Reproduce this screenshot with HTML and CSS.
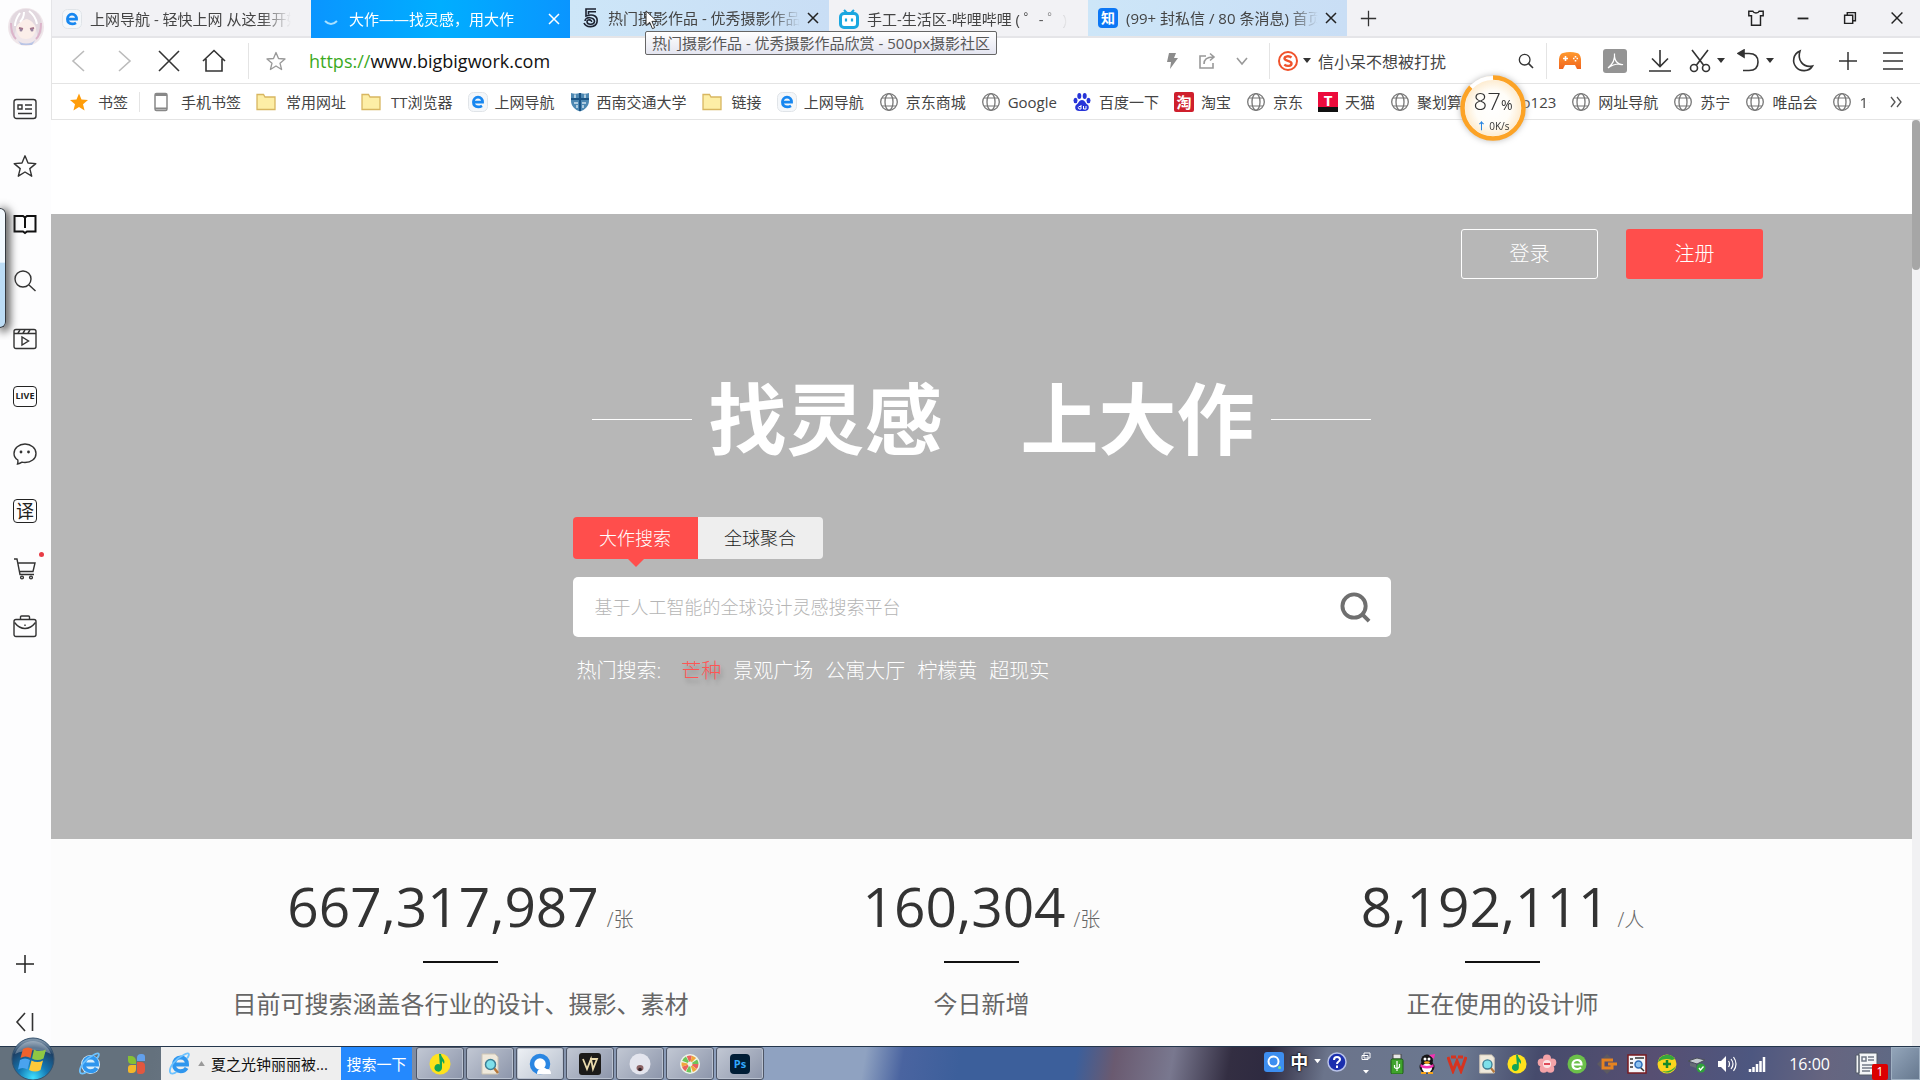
FILE: index.html
```html
<!DOCTYPE html>
<html lang="zh-CN">
<head>
<meta charset="utf-8">
<title>大作——找灵感，用大作</title>
<link rel="stylesheet" href="styles.css">
</head>
<body>
<svg class="defs" aria-hidden="true">
  <defs>
    <linearGradient id="gBlue" x1="0" y1="0" x2="0" y2="1"><stop offset="0" stop-color="#5cc4ff"/><stop offset="1" stop-color="#1577dc"/></linearGradient>
    <radialGradient id="gOrb" cx=".5" cy=".95" r=".9"><stop offset="0" stop-color="#3fe0ff"/><stop offset=".4" stop-color="#1478b4"/><stop offset=".8" stop-color="#1d4065"/><stop offset="1" stop-color="#7d93a8"/></radialGradient>
    <linearGradient id="gPad" x1="0" y1="0" x2="0" y2="1"><stop offset="0" stop-color="#ff9a2e"/><stop offset="1" stop-color="#f0641e"/></linearGradient>
    <radialGradient id="gBall"><stop offset="0" stop-color="#fff"/><stop offset=".55" stop-color="#fffdf8"/><stop offset="1" stop-color="#fde6c2"/></radialGradient>
    <symbol id="globe" viewBox="0 0 20 20"><g fill="none" stroke="#777" stroke-width="1.3"><circle cx="10" cy="10" r="8.3"/><ellipse cx="10" cy="10" rx="4" ry="8.3"/><path d="M3 6h14M3 14h14" stroke-width="1"/></g></symbol>
    <symbol id="folder" viewBox="0 0 20 20"><path d="M1 3.5V17.500h18V5H9L7.500 2.500H1z" fill="#fdeea6" stroke="#d8b660" stroke-width="1.300"/></symbol>
    <symbol id="edge" viewBox="0 0 20 20"><rect x=".5" y=".5" width="19" height="19" rx="5" fill="#f4f7fa" stroke="#e0e4e8"/><path d="M5.400 10.200h9.200c.2-3-1.800-5-4.600-5-2.700 0-4.600 2-4.600 4.900 0 3 2 4.800 4.800 4.800 1.500 0 2.700-.4 3.800-1.100" fill="none" stroke="#1787f0" stroke-width="2.700"/></symbol>
    <symbol id="ie" viewBox="0 0 24 24"><path d="M6 12.500h13c.2-4.500-2.600-7-6.500-7S6 8.500 6 12.500s2.800 6.700 6.700 6.700c2.600 0 4.600-1 5.900-3.200" fill="none" stroke="#2f96ee" stroke-width="4"/><path d="M19 6.500C23 1 20 0 15.500 3 7 7 1 15.500 2 20c.6 2.600 4 1.600 6.500 0" fill="none" stroke="#6cc2ff" stroke-width="1.800"/></symbol>
    <symbol id="x" viewBox="0 0 14 14"><path d="M2 2l10 10M12 2L2 12" fill="none" stroke="currentColor" stroke-width="1.500"/></symbol>
    <symbol id="plus" viewBox="0 0 20 20"><path d="M10 1v18M1 10h18" fill="none" stroke="currentColor" stroke-width="1.500"/></symbol>
    <symbol id="star" viewBox="0 0 24 24"><path d="M12 1.800l3 7.200 7.800.6-6 5 1.900 7.600L12 18l-6.700 4.200 1.900-7.600-6-5L9 9z" stroke-linejoin="round"/></symbol>
    <symbol id="lens" viewBox="0 0 24 24"><circle cx="10" cy="10" r="8" fill="none" stroke="currentColor" stroke-width="2"/><path d="M16 16l6.500 6.500" stroke="currentColor" stroke-width="2.400"/></symbol>
    <symbol id="caret" viewBox="0 0 8 6"><path d="M0 0h8L4 5z" fill="currentColor"/></symbol>
    <symbol id="note" viewBox="0 0 22 22"><circle cx="11" cy="11" r="10.500" fill="#ffe21c"/><path d="M10 1l2 0c0 4 5 5 3 10l-2-3v7a3.800 3.800 0 1 1-2.200-3.600z" fill="#12a557"/></symbol>
    <symbol id="finddoc" viewBox="0 0 22 22"><path d="M3 1h13l3 3v17H3z" fill="#efe9dc" stroke="#cfc6b4"/><path d="M15 15l4 5" stroke="#b5763a" stroke-width="2.500"/><circle cx="11.500" cy="11.500" r="5" fill="#7ee0ea" stroke="#3d7f96" stroke-width="1.500"/></symbol>
  </defs>
</svg>

<div class="screen">
  <aside class="side">
    <svg class="avatar" viewBox="0 0 38 42"><ellipse cx="19" cy="21" rx="18" ry="19" fill="#efe6ea"/><path d="M3 26C1 10 9 3 19 3s18 7 16 23l-4 6-3-13-9-6-9 6-3 13z" fill="#e2d8df"/><path d="M9 22c1 8 5 11 10 11s9-3 10-11c-2-5-5-8-9-9-5 1-9 4-11 9z" fill="#fbeee9"/><path d="M13 7c-3 4-5 8-5 13M22 5c4 3 7 7 8 13M17 6c0 4-1 7-4 10" fill="none" stroke="#fff" stroke-width="2"/><path d="M12 22l4 1M23 23l4-1" stroke="#a6758b" stroke-width="2"/><circle cx="14" cy="24" r="1.500" fill="#96839f"/><circle cx="25" cy="24" r="1.500" fill="#96839f"/><path d="M10 33c3 6 15 6 19 0l-4 6H14z" fill="#b9c5e6"/><path d="M4 17c0 8 2 13 5 16M34 17c0 8-2 13-5 16" stroke="#dcb4ca" stroke-width="2" fill="none"/></svg>
    <nav class="side-nav" aria-label="侧边栏">
      <button aria-label="资讯"><svg viewBox="0 0 24 24"><rect x="1" y="2.500" width="22" height="19" rx="2.500"/><path d="M5 8h4v4H5zM12 8h7M12 12h7M5 16.500h14"/></svg></button>
      <button aria-label="收藏"><svg viewBox="0 0 24 24"><use href="#star"/></svg></button>
      <button aria-label="阅读"><svg viewBox="0 0 24 24" class="bold"><path d="M1.500 4H10l2 1.500L14 4h8.500v15.500H14L12 21l-2-1.500H1.500zM12 5.500V16"/></svg></button>
      <button aria-label="搜索"><svg viewBox="0 0 24 24"><circle cx="10" cy="10" r="8"/><path d="M16 16l6.500 6"/></svg></button>
      <button aria-label="视频"><svg viewBox="0 0 24 24"><rect x="1" y="2.500" width="22" height="19" rx="2"/><path d="M1 6.500h22M5 6l2-3M10 6l2-3M15 6l2-3M9 10v8l6.500-4z"/></svg></button>
      <button aria-label="直播"><span class="box live">LIVE</span></button>
      <button aria-label="消息"><svg viewBox="0 0 24 24"><path d="M4.500 22c.5-1.500.6-2.500.3-4C2.400 16.500 1 14 1 11.500 1 6 6 2 12 2s11 4 11 9.500S18 20.500 12 20.500c-1 0-2 0-3-.3-1.300.9-2.600 1.500-4.500 1.800z"/><circle cx="8" cy="10" r=".7"/><circle cx="15.500" cy="10" r=".7"/></svg></button>
      <button aria-label="翻译"><span class="box trans">译</span></button>
      <button aria-label="购物" class="dot"><svg viewBox="0 0 24 24"><path d="M1 2h3l3 15.500h14M5.500 6H22l-2 8.500H7"/><circle cx="9" cy="20.500" r="1.400"/><circle cx="18" cy="20.500" r="1.400"/></svg></button>
      <button aria-label="工具箱"><svg viewBox="0 0 24 24"><rect x="1" y="5.500" width="22" height="17" rx="2"/><path d="M7.500 5V3q0-1 1-1h7q1 0 1 1v2M1.500 8.500C5 13 9 14.500 12 14.500s7-1.500 10.500-6M12 10.500v1.500"/></svg></button>
    </nav>
    <div class="side-foot">
      <button aria-label="添加"><svg class="small" viewBox="0 0 20 20"><use href="#plus"/></svg></button>
      <button aria-label="收起"><svg class="small" viewBox="0 0 20 20"><path d="M10 1L2 10l8 9M17.500 1v18"/></svg></button>
    </div>
    <div class="dock"></div>
  </aside>

  <div class="browser">
    <header class="tabs">
      <div class="tab"><svg class="fav" viewBox="0 0 20 20"><use href="#edge"/></svg><span>上网导航 - 轻快上网 从这里开始</span></div>
      <div class="tab current"><svg class="fav" viewBox="0 0 20 20"><path d="M4 12q6 6 12 0" fill="none" stroke="#a8e0ff" stroke-width="2"/></svg><span>大作——找灵感，用大作</span><button aria-label="关闭"><svg viewBox="0 0 14 14"><use href="#x"/></svg></button></div>
      <div class="tab tint"><svg class="fav" viewBox="0 0 20 20"><g fill="none" stroke="#1c2230" stroke-width="1.600"><path d="M16 1H6v7c8-3 12 1 11 6-1 6-11 6-13 1M16 3.800H8.500v2.500M5 13c0-5 10-4 9.500.5-.5 4-7.500 3.500-7.500 0 0-2.500 5-2 4.500.5"/></g></svg><span>热门摄影作品 - 优秀摄影作品欣赏</span><button aria-label="关闭"><svg viewBox="0 0 14 14"><use href="#x"/></svg></button></div>
      <div class="tab"><svg class="fav" viewBox="0 0 20 20"><rect x="1.500" y="4.500" width="17" height="14" rx="3.500" fill="#fff" stroke="#1aa7e0" stroke-width="3"/><path d="M5 1l3 3M15 1l-3 3M7 9.500v3M13 9.500v3" stroke="#1aa7e0" stroke-width="2.200"/></svg><span>手工-生活区-哔哩哔哩 ( ゜- ゜)つロ</span></div>
      <div class="tab tint"><i class="fav zhi">知</i><span>(99+ 封私信 / 80 条消息) 首页</span><button aria-label="关闭"><svg viewBox="0 0 14 14"><use href="#x"/></svg></button></div>
      <button class="new" aria-label="新标签页"><svg viewBox="0 0 20 20"><use href="#plus"/></svg></button>
      <div class="win">
        <button aria-label="皮肤"><svg viewBox="0 0 20 20"><path d="M2 2.500h4.500c1 2.500 6 2.500 7 0H18v5h-3v10.500H5V7.500H2z"/></svg></button>
        <button aria-label="最小化"><svg viewBox="0 0 20 20"><path d="M4 10.500h12" stroke-width="2"/></svg></button>
        <button aria-label="还原"><svg viewBox="0 0 20 20"><path d="M4 7h9v9H4zM7 7V4h9v9h-3"/></svg></button>
        <button aria-label="关闭窗口"><svg viewBox="0 0 20 20"><path d="M4 4l12 12M16 4L4 16"/></svg></button>
      </div>
    </header>

    <div class="toolbar">
      <button class="w45 off" aria-label="后退"><svg viewBox="0 0 24 24"><path d="M17 2L6 12l11 10"/></svg></button>
      <button class="w45 off" aria-label="前进"><svg viewBox="0 0 24 24"><path d="M7 2l11 10L7 22"/></svg></button>
      <button class="w45" aria-label="停止"><svg viewBox="0 0 24 24"><path d="M2 2l20 20M22 2L2 22"/></svg></button>
      <button class="w45" aria-label="主页"><svg viewBox="0 0 24 24"><path d="M1 12L12 1.500 23 12M4 10v12h16V10"/></svg></button>
      <i class="sep gap"></i>
      <button class="w45 mute" aria-label="收藏"><svg class="s20" viewBox="0 0 24 24"><use href="#star"/></svg></button>
      <label class="url"><span>https://</span><input type="text" value="www.bigbigwork.com" aria-label="地址"></label>
      <button class="w35 mute" aria-label="极速"><svg class="s18" viewBox="0 0 18 18"><path d="M6 1h7l-2 5h4L7 17l1-7H4z" fill="#8c8c8c" stroke="none"/></svg></button>
      <button class="w35 mute" aria-label="分享"><svg class="s18" viewBox="0 0 18 18"><path d="M8 4H2v12h13v-5M6 12c0-5 3-7 9-7M12 1.500L16 5l-4 3.500"/></svg></button>
      <button class="w35 mute" aria-label="展开"><svg class="s18" viewBox="0 0 18 18"><path d="M4 6l5 6 5-6"/></svg></button>
      <label class="query"><svg viewBox="0 0 20 20"><circle cx="10" cy="10" r="9" fill="#fff" stroke="#f0522b" stroke-width="2"/><path d="M13.500 6.500C11 4.500 6.500 5 6.500 7.600s7 2 7 4.800-4.500 3.300-7.200 1.200" fill="none" stroke="#f0522b" stroke-width="2.400"/></svg><svg class="caret" viewBox="0 0 8 6"><use href="#caret"/></svg><input type="text" value="信小呆不想被打扰" aria-label="搜索"><svg class="go" viewBox="0 0 24 24"><use href="#lens"/></svg></label>
      <button class="w45" aria-label="游戏"><svg viewBox="0 0 24 24"><path d="M5 4q7-2 14 0c2 .5 3.500 2 4 6v10h-4l-2-4H7l-2 4H1V10c.5-4 2-5.500 4-6z" fill="url(#gPad)" stroke="none"/><path d="M7.500 7v5M5 9.500h5M15 9.500h1.500M18.500 9.500H20M17.500 7v1.500M17.500 11v1.500" stroke="#fff"/></svg></button>
      <button class="w45" aria-label="PDF"><svg viewBox="0 0 24 24"><rect width="24" height="24" rx="3" fill="#949494" stroke="none"/><path d="M5 19c5-4 7-10 6.500-14.500C11 12 15 16 20 15.500 14 14 9 16 5 19z" stroke="#fff" stroke-width="1.200"/></svg></button>
      <button class="w45" aria-label="下载"><svg viewBox="0 0 24 24"><path d="M12 1v16M4 9.500l8 8 8-8M1 22h22"/></svg></button>
      <button class="w49" aria-label="截图"><svg viewBox="0 0 24 24"><path d="M4 1l11.500 15M20 1L8.500 16"/><circle cx="6" cy="19" r="3.500"/><circle cx="18" cy="19" r="3.500"/></svg><svg class="caret" viewBox="0 0 8 6"><use href="#caret"/></svg></button>
      <button class="w49" aria-label="恢复"><svg viewBox="0 0 24 24"><path d="M3 4.500h9c6 0 9 3.500 9 8.500s-3 8.500-9 8.500H6"/><path d="M1 4.500L7 1v7z" fill="#333"/></svg><svg class="caret" viewBox="0 0 8 6"><use href="#caret"/></svg></button>
      <button class="w45" aria-label="夜间"><svg viewBox="0 0 24 24"><path d="M9 2C2 5 1 13 5 18s13 5 16.500-1C12 19 6 11 9 2z"/></svg></button>
      <button class="w45" aria-label="添加"><svg class="s20" viewBox="0 0 20 20"><use href="#plus"/></svg></button>
      <button class="w45" aria-label="菜单"><svg viewBox="0 0 24 24"><path d="M2 4h20M2 12h20M2 20h20"/></svg></button>
    </div>

    <nav class="marks" aria-label="书签栏">
      <a href="#" class="first"><svg viewBox="0 0 24 24" fill="#ff9d0a"><use href="#star"/></svg>书签</a>
      <i class="sep"></i>
      <a href="#" class="wide"><svg viewBox="0 0 20 20"><rect x="4" y="1.500" width="12" height="17" rx="1.500" fill="#fff" stroke="#888" stroke-width="1.500"/><path d="M4 3h12M4 16.500h12" stroke="#888" stroke-width="2"/></svg>手机书签</a>
      <a href="#" class="wide"><svg><use href="#folder"/></svg>常用网址</a>
      <a href="#" class="wide"><svg><use href="#folder"/></svg>TT浏览器</a>
      <a href="#"><svg><use href="#edge"/></svg>上网导航</a>
      <a href="#"><svg viewBox="0 0 20 20"><path d="M1 1q4 1.500 9 0 5 1.500 9 0v8c0 5-4 9-9 10.500C5 18 1 14 1 9z" fill="#4d88b2"/><path d="M10 1v18M1 7h18" stroke="#1b5484" stroke-width="2"/><path d="M4 11h4M12 11h4M5 2.500V6M15 2.500V6M7 13v3M13 13v3" stroke="#cfe2f0" stroke-width="1.500"/></svg>西南交通大学</a>
      <a href="#" class="wide"><svg><use href="#folder"/></svg>链接</a>
      <a href="#"><svg><use href="#edge"/></svg>上网导航</a>
      <a href="#"><svg><use href="#globe"/></svg>京东商城</a>
      <a href="#"><svg><use href="#globe"/></svg>Google</a>
      <a href="#"><svg viewBox="0 0 20 20" fill="#2734d8"><ellipse cx="7.300" cy="4" rx="2" ry="3"/><ellipse cx="12.700" cy="4" rx="2" ry="3"/><ellipse cx="3.500" cy="8.500" rx="2" ry="2.700"/><ellipse cx="16.500" cy="8.500" rx="2" ry="2.700"/><path d="M10 8c3 0 3 3 6 5 2 3 0 6-3 6H7c-3 0-5-3-3-6 3-2 3-5 6-5z"/><path d="M9 13v4H7q-1.500-1.500 0-2.500h2M11.500 14v3H14v-3" fill="none" stroke="#fff"/></svg>百度一下</a>
      <a href="#"><i class="badge tao">淘</i>淘宝</a>
      <a href="#"><svg><use href="#globe"/></svg>京东</a>
      <a href="#"><i class="badge tmall">T</i>天猫</a>
      <a href="#"><svg><use href="#globe"/></svg>聚划算</a>
      <a href="#"><svg><use href="#globe"/></svg>hao123</a>
      <a href="#"><svg><use href="#globe"/></svg>网址导航</a>
      <a href="#"><svg><use href="#globe"/></svg>苏宁</a>
      <a href="#"><svg><use href="#globe"/></svg>唯品会</a>
      <a href="#" class="last"><svg><use href="#globe"/></svg>1号店</a>
      <button class="more" aria-label="更多"><svg viewBox="0 0 14 14"><path d="M2 2l4 5-4 5M8 2l4 5-4 5" fill="none" stroke="#555" stroke-width="1.300"/></svg></button>
    </nav>

    <div class="view">
      <main class="page">
        <div class="blank"></div>
        <section class="hero">
          <div class="wrap actions">
            <button class="login">登录</button>
            <button class="signup">注册</button>
          </div>
          <h1>找灵感　上大作</h1>
          <div class="finder">
            <div class="modes">
              <button class="on">大作搜索</button><button>全球聚合</button>
            </div>
            <form class="box-search">
              <input type="text" placeholder="基于人工智能的全球设计灵感搜索平台" aria-label="搜索灵感">
              <button type="button" aria-label="搜索"><svg viewBox="0 0 32 32"><circle cx="14.500" cy="14.500" r="12" fill="none" stroke="#6f6f6f" stroke-width="4"/><path d="M23 23l7 7" stroke="#6f6f6f" stroke-width="4"/></svg></button>
            </form>
            <p class="hot"><span>热门搜索:</span><a href="#" class="top">芒种</a><a href="#">景观广场</a><a href="#">公寓大厅</a><a href="#">柠檬黄</a><a href="#">超现实</a></p>
          </div>
        </section>
        <section class="wrap stats">
          <div><p class="num">667,317,987<small>/张</small></p><p class="cap">目前可搜索涵盖各行业的设计、摄影、素材</p></div>
          <div><p class="num">160,304<small>/张</small></p><p class="cap">今日新增</p></div>
          <div><p class="num">8,192,111<small>/人</small></p><p class="cap">正在使用的设计师</p></div>
        </section>
      </main>
      <div class="scroll"><i></i></div>
    </div>
  </div>

  <footer class="taskbar">
    <button class="start" aria-label="开始"><svg viewBox="0 0 44 44"><circle cx="22" cy="22" r="21" fill="url(#gOrb)" stroke="#35526e"/><path d="M4 17a19 19 0 0 1 36 0c-10-5-26-5-36 0z" fill="#fff" opacity=".3"/><path d="M12 12q5-3 9.500 0l-2 9q-5-3-10 0z" fill="#f0622d"/><path d="M23 12.500q5 3 12 0l-2.500 9q-6 3-11.500 0z" fill="#8fc843"/><path d="M9 23q5-3 10 0l-2.500 9.500q-5-3-9.500 0z" fill="#4aa3ee"/><path d="M20.500 23.500q6 3 11.500 0L29.500 33q-5 3-11.500 0z" fill="#fdc93b"/></svg></button>
    <button class="quick" aria-label="IE"><svg viewBox="0 0 24 24"><circle cx="12.500" cy="12.500" r="9.500" fill="#d9effc"/><use href="#ie"/></svg></button>
    <button class="quick" aria-label="应用"><svg viewBox="0 0 24 24"><path d="M11 12H7a4 4 0 0 1-4-4V4h3a5 5 0 0 1 5 5z" fill="#86c035"/><path d="M12 9V6a4 4 0 0 1 4-4h1a3 3 0 0 1 3 3v4z" fill="#62a0ec"/><path d="M11 13v4a4 4 0 0 1-4 4H5a2 2 0 0 1-2-2v-3a3 3 0 0 1 3-3z" fill="#f3b72a"/><path d="M12 10h4a4 4 0 0 1 4 4v4a4 4 0 0 1-4 4h-2a2 2 0 0 1-2-2z" fill="#e2573f"/></svg></button>
    <label class="desk"><svg viewBox="0 0 24 24"><use href="#ie"/></svg><svg class="up" viewBox="0 0 8 6"><path d="M0 6h8L4 0z" fill="#999"/></svg><input type="text" value="夏之光钟丽丽被..." aria-label="桌面搜索"></label>
    <button class="desk-go">搜索一下</button>
    <div class="apps">
      <button aria-label="QQ音乐"><svg><use href="#note"/></svg></button>
      <button aria-label="文件搜索"><svg><use href="#finddoc"/></svg></button>
      <button aria-label="QQ浏览器" class="hot-app"><svg viewBox="0 0 22 22"><circle cx="11" cy="11" r="8" fill="#fff" stroke="#2a86e2" stroke-width="4.500"/><path d="M8 21q0-5 4.500-5 2-3 5 0 4.500 0 4.500 5z" fill="#fff"/></svg></button>
      <button aria-label="WPS"><svg viewBox="0 0 22 22"><rect width="22" height="22" rx="3" fill="#1b1a19"/><path d="M4 6l4 10 4-10 2 10 4-10h-7" fill="none" stroke="#e9d9ac" stroke-width="1.800"/></svg></button>
      <button aria-label="相册"><svg viewBox="0 0 22 22"><circle cx="11" cy="11" r="10.500" fill="#e4e5ee"/><ellipse cx="11" cy="15" rx="3.500" ry="3" fill="#8d6466"/><circle cx="11" cy="16.500" r="1.800" fill="#33232a"/></svg></button>
      <button aria-label="看图"><svg viewBox="0 0 22 22"><circle cx="11" cy="11" r="10" fill="#eef5ea"/><circle cx="11" cy="11" r="5.500" fill="none" stroke="#e9635f" stroke-width="6" stroke-dasharray="3.500 8.020"/><circle cx="11" cy="11" r="5.500" fill="none" stroke="#6fc45a" stroke-width="6" stroke-dasharray="3.500 8.020" stroke-dashoffset="4"/><circle cx="11" cy="11" r="5.500" fill="none" stroke="#f0a63c" stroke-width="6" stroke-dasharray="3 8.520" stroke-dashoffset="8"/></svg></button>
      <button aria-label="Photoshop"><i class="ps">Ps</i></button>
    </div>
    <div class="tray">
      <div class="ime">
        <svg viewBox="0 0 20 20"><rect width="20" height="20" rx="3" fill="#3d8ef0"/><circle cx="9.500" cy="9.500" r="5" fill="none" stroke="#fff" stroke-width="2"/><circle cx="15.500" cy="15.500" r="1.500" fill="#7de08a"/></svg>
        <b>中</b>
        <svg class="caret" viewBox="0 0 8 6"><use href="#caret"/></svg>
        <svg viewBox="0 0 20 20"><circle cx="10" cy="10" r="9" fill="#1b2fae" stroke="#b8c2e8" stroke-width="1.500"/><path d="M7 8q0-3 3-3t3 2.500c0 2-3 2-3 4.500M10 13.500V16" fill="none" stroke="#fff" stroke-width="2"/></svg>
        <svg class="narrow" viewBox="0 0 10 24"><path d="M3 1h6v5H3zM1 3.500h6v4H1z" fill="#56607a" stroke="#fff"/><path d="M2 18h6l-3 3.500z" fill="#fff"/></svg>
      </div>
      <svg viewBox="0 0 20 20"><path d="M6 0h8v5H6z" fill="#e8e8e8" stroke="#444"/><rect x="4" y="5" width="12" height="15" rx="1.500" fill="#3fa32c" stroke="#1e5c14"/><path d="M10 7v10M7.500 11v2.500l2.500 1.500 2.500-2V10" fill="none" stroke="#fff" stroke-width="1.200"/></svg>
      <svg viewBox="0 0 20 20"><ellipse cx="10" cy="13" rx="7.500" ry="6.500" fill="#161616"/><circle cx="10" cy="6.500" r="6" fill="#161616"/><ellipse cx="10" cy="14" rx="5" ry="4.500" fill="#fff"/><path d="M3.500 10q6.500 4 13 0v3q-6.500 3-13 0z" fill="#f432b2"/><circle cx="8" cy="5" r="1.500" fill="#fff"/><circle cx="12" cy="5" r="1.500" fill="#fff"/><ellipse cx="10" cy="8.500" rx="3" ry="1.200" fill="#f9a51a"/><path d="M12 1l6-1-1 5z" fill="#f432b2"/><path d="M4 19h5M11 19h5" stroke="#f9a51a" stroke-width="2"/></svg>
      <svg viewBox="0 0 20 20"><path d="M1 3l5 14 4-10 4 10 5-14M4 3h5M11 3h5" fill="none" stroke="#d6331f" stroke-width="3"/></svg>
      <svg><use href="#finddoc"/></svg>
      <svg><use href="#note"/></svg>
      <svg viewBox="0 0 20 20" fill="#f4a3a8"><circle cx="10" cy="4.500" r="4"/><circle cx="15.300" cy="8.400" r="4"/><circle cx="13.300" cy="14.700" r="4"/><circle cx="6.700" cy="14.700" r="4"/><circle cx="4.700" cy="8.400" r="4"/><circle cx="10" cy="10" r="4" fill="#fbe4e4"/><path d="M7 10h6" stroke="#df4a58" stroke-width="2"/></svg>
      <svg viewBox="0 0 20 20"><circle cx="10" cy="10" r="9.500" fill="#6cc04a"/><path d="M6 10.500h8.500c0-3-2-4.500-4.300-4.500C7.500 6 5.500 7.800 5.500 10.500S7.500 15 10.500 15q2 0 3.500-1.500" fill="none" stroke="#fff" stroke-width="2.200"/></svg>
      <svg viewBox="0 0 20 20"><path d="M10 0l4 4H6zM10 20l4-4H6zM0 10l4-4v8z" fill="#5d5a60"/><path d="M16 6H6v8h9v-4h-4M16 10h4" fill="none" stroke="#e58321" stroke-width="3"/></svg>
      <svg viewBox="0 0 20 20"><rect x="1" y="1" width="18" height="18" fill="#f4f6fa" stroke="#7a1b20" stroke-width="1.500"/><path d="M3 5h3M3 9h3M3 13h3M8 4h9M13 13l4 4" stroke="#333" stroke-width="1.500"/><circle cx="11.500" cy="10.500" r="3.500" fill="#8cc1f0" stroke="#2c6cb8" stroke-width="1.500"/></svg>
      <svg viewBox="0 0 20 20"><circle cx="10" cy="10" r="9.500" fill="#fbd51e"/><path d="M1 8a9.500 9.500 0 0 1 17-3l-3 1q-8-3-14 2z" fill="#35a83a"/><path d="M5 17q8 2 14-5a9.500 9.500 0 0 1-14 5z" fill="#35a83a"/><path d="M10 6v8M6 10h8" stroke="#168a2a" stroke-width="2.500"/></svg>
      <svg viewBox="0 0 20 20"><path d="M1 7l9-3 8 2-8 4z" fill="#c5cad0" stroke="#4a4f58"/><path d="M3 9v3l6 2v-4z" fill="#666c76"/><circle cx="14" cy="14" r="4.500" fill="#2fa23a"/><path d="M12 14l1.500 2 3-3.500" fill="none" stroke="#fff" stroke-width="1.300"/></svg>
      <svg viewBox="0 0 20 20"><path d="M1 7h3l5-5v16l-5-5H1z" fill="#fff"/><path d="M11.500 7q2 3 0 6M14 5q4 5 0 10M16.500 3q5 7 0 14" fill="none" stroke="#fff" stroke-width="1.200"/></svg>
      <svg viewBox="0 0 20 20"><path d="M3 15v3M6.500 13v5M10 10v8M13.500 7v11M17 3v15" stroke="#fff" stroke-width="2.500"/></svg>
      <time>16:00</time>
      <div class="news"><svg viewBox="0 0 24 24"><path d="M1 3h3v18H1zM4 1h18v22H4z" fill="#f4f6f8" stroke="#555c68"/><path d="M7 5h4v4H7zM13 5h6M13 8h6M7 13h12M7 16h12M7 19h8" stroke="#717a86" stroke-width="1.500" fill="none"/></svg><b>1</b></div>
      <button class="show" aria-label="显示桌面"></button>
    </div>
  </footer>

  <div class="tip" role="tooltip">热门摄影作品 - 优秀摄影作品欣赏 - 500px摄影社区</div>
  <svg class="cursor" viewBox="0 0 14 22"><path d="M1 1v16l4-3.500 3 7 2.500-1-3-7H13z" fill="#fff" stroke="#222"/></svg>
  <div class="ball">
    <svg viewBox="0 0 68 68"><circle cx="34" cy="34" r="32" fill="url(#gBall)"/><circle cx="34" cy="34" r="30" fill="none" stroke="#fff" stroke-width="4"/><circle cx="34" cy="34" r="30.500" fill="none" stroke="#fca326" stroke-width="4.500" pathLength="100" stroke-dasharray="87 13" transform="rotate(-90 34 34)"/></svg>
    <p class="pct">87<small>%</small></p>
    <p class="rate"><b>↑</b> 0K/s</p>
  </div>
</div>
</body>
</html>
```
FILE: styles.css
```css
* { box-sizing: border-box; }

body {
  margin: 0;
  background: #fff;
  color: #333;
  font: 15px/20px "Open Sans", "Noto Sans CJK SC", sans-serif;
  overflow: hidden;
}

p, h1 { margin: 0; }
i { font-style: normal; }
a { color: inherit; text-decoration: none; }

button, input {
  margin: 0;
  padding: 0;
  border: 0;
  background: none;
  color: inherit;
  font: inherit;
  outline: 0;
}

button {
  display: flex;
  align-items: center;
  justify-content: center;
  flex: none;
}

.defs { position: absolute; width: 0; height: 0; }

.screen {
  position: relative;
  display: grid;
  grid-template: minmax(0, 1fr) 34px / 51px minmax(0, 1fr);
  height: 100vh;
}

/* Sidebar */
.side {
  position: relative;
  display: flex;
  flex-direction: column;
  background: #fdfdfe;
}

.avatar { display: block; width: 38px; height: 42px; margin: 6px auto 32px; }
.side-nav { display: grid; grid-auto-rows: 1fr; height: 575px; }
.side button { position: relative; width: 50px; }
.side svg:not(.avatar) { width: 24px; height: 24px; fill: none; stroke: #333; stroke-width: 1.4; color: #222; }
.side svg.bold { stroke-width: 2; stroke: #111; }
.side svg.small { width: 20px; height: 20px; stroke-width: 1.6; }

.box {
  display: flex;
  align-items: center;
  justify-content: center;
  width: 24px;
  height: 24px;
  border: 1px solid #222;
  border-radius: 4px;
  color: #222;
  font-size: 18px;
}

.live { height: 21px; font-size: 9px; font-weight: 700; }

.dot::after {
  content: "";
  position: absolute;
  top: 12px;
  right: 6px;
  width: 5px;
  height: 5px;
  border-radius: 50%;
  background: #e83c46;
}

.side-foot { margin-top: auto; padding-bottom: 1px; }
.side-foot button { height: 46px; }
.side-foot button + button { margin-top: 12px; }

.dock {
  position: absolute;
  top: 208px;
  left: 0;
  width: 6px;
  height: 120px;
  border: solid #33383f;
  border-width: 1px 1px 1px 0;
  border-radius: 0 6px 6px 0;
  background: linear-gradient(#f2f9ff 45%, #bcdcf5 46%);
  box-shadow: 2px 2px 9px 2px #555;
  clip-path: inset(-12px -16px -12px 0);
}

/* Browser chrome */
.browser {
  display: flex;
  flex-direction: column;
  min-width: 0;
  min-height: 0;
}

.tabs {
  display: flex;
  height: 38px;
  border-bottom: 2px solid #e5e5e8;
  background: #f2f2f5;
}

.tab {
  display: flex;
  align-items: center;
  gap: 8px;
  flex: 0 1 259px;
  min-width: 0;
  height: 38px;
  padding: 0 5px 0 10px;
  color: #444;
}

.tab:first-child { flex-basis: 260px; border-left: 1px solid #e5e5e8; }
.tab span { flex: 1; overflow: hidden; white-space: nowrap; margin-right: 15px; mask: linear-gradient(90deg, #000 85%, transparent); }
.tab button { width: 22px; height: 22px; color: #222; }
.tab button svg { width: 14px; height: 14px; }
.tab span:has(+ button) { margin-right: -6px; }
.fav { flex: none; width: 20px; height: 20px; }
.current { background: linear-gradient(90deg, #0a95ff, #00aeff 50%, #0a95ff); color: #fff; }
.current button { color: #fff; }
.tint { background: linear-gradient(90deg, #cde6f8, #c9def5); height: 36px; }
.zhi { border-radius: 4px; background: #0b77f5; color: #fff; font-weight: 700; font-size: 14px; line-height: 20px; text-align: center; }
.new { width: 42px; }
.new svg { width: 17px; height: 17px; }
.win { display: flex; margin-left: auto; }
.win button { width: 47px; }
.win svg { width: 18px; height: 18px; fill: none; stroke: #222; stroke-width: 1.6; }

.toolbar {
  display: flex;
  align-items: center;
  height: 46px;
  padding: 0 5px 0 4px;
  border: solid #e4e4e4;
  border-width: 0 0 1px 1px;
}

.toolbar button { height: 44px; gap: 5px; }
.toolbar svg { width: 24px; height: 24px; flex: none; fill: none; stroke: #333; stroke-width: 1.6; color: #333; }
.toolbar svg.s20 { width: 20px; height: 20px; }
.toolbar svg.s18 { width: 18px; height: 18px; }
.toolbar svg.caret { width: 8px; height: 6px; stroke: none; }
.toolbar .off svg { stroke: #bbb; }
.toolbar .mute svg { stroke: #999; }
.w45 { width: 45px; }
.w35 { width: 35px; }
.w49 { width: 49px; }
.sep { flex: none; width: 1px; height: 36px; background: #e4e4e4; }
.gap { margin: 0 4px 0 12px; }

.url { display: flex; flex: 1; min-width: 0; margin-left: 11px; font-size: 18px; line-height: 28px; color: #111; }
.url span { color: #3caa1e; }
.url input { flex: 1; min-width: 0; height: 28px; }

.query {
  display: flex;
  align-items: center;
  flex: none;
  gap: 5px;
  width: 278px;
  height: 36px;
  margin-left: 10px;
  padding: 0 12px 0 8px;
  border: solid #e4e4e4;
  border-width: 0 1px;
  font-size: 16px;
  color: #444;
}

.query svg:first-child { width: 20px; height: 20px; stroke: none; }
.query input { flex: 1; min-width: 0; height: 24px; margin-left: 2px; }
.toolbar .query svg.go { width: 16px; height: 16px; stroke: none; }

.marks {
  display: flex;
  align-items: center;
  gap: 15px;
  height: 36px;
  padding: 0 13px 0 17px;
  border: solid #e4e4e4;
  border-width: 0 0 1px 1px;
  color: #444;
}

.marks a { display: flex; align-items: center; flex: none; gap: 7px; white-space: nowrap; }
.marks a.wide { gap: 10px; }
.marks a.first { gap: 9px; margin-right: -4px; }
.marks a svg { width: 20px; height: 20px; }
.marks .sep { height: 20px; margin-right: -4px; }
.marks .last { flex: 0 1 44px; min-width: 0; overflow: hidden; mask: linear-gradient(90deg, #000 85%, transparent); }
.marks .last svg { flex: none; }
.badge { width: 20px; height: 20px; border-radius: 2px; background: #cf1f2c; color: #fff; font-weight: 700; text-align: center; }
.tmall { border-radius: 0; border-bottom: 5px solid #111; background: #ec0b3c; line-height: 16px; }
.more { width: 22px; margin-left: auto; }
.more svg { width: 14px; height: 14px; }

/* Page */
.view { display: flex; flex: 1; min-height: 0; background: #fcfcfc; }
.page { flex: 1; min-width: 0; overflow: hidden; }
.scroll { flex: none; width: 8px; background: #f1f1f3; }
.scroll i { display: block; height: 150px; border-radius: 4px; background: #a6a6a6; }
.blank { height: 94px; background: #fff; }
.wrap { width: 84%; margin: 0 auto; }

.hero { padding: 15px 0 156px; background: #b7b7b7; color: #fff; }
.actions { display: flex; justify-content: flex-end; gap: 28px; }
.actions button { width: 137px; height: 50px; border-radius: 3px; font-size: 20px; font-weight: 300; }
.login { border: 1px solid #fff; }
.signup { background: #ff4e4c; }

h1 {
  display: flex;
  align-items: center;
  justify-content: center;
  gap: 16px;
  margin: 100px 0 58px;
  font-size: 78px;
  line-height: 80px;
  font-weight: 700;
  white-space: pre;
}

h1::before, h1::after { content: ""; width: 100px; height: 1px; background: #fff; }

.finder { width: 818px; max-width: 100%; margin: 0 auto; }
.modes { display: flex; font-size: 18px; }
.modes button { position: relative; width: 125px; height: 42px; border-radius: 0 4px 4px 0; background: #eee; color: #222; font-weight: 300; }
.modes .on { border-radius: 4px 0 0 4px; background: #ff4e4c; color: #fff; }

.modes .on::after {
  content: "";
  position: absolute;
  top: 100%;
  left: 50%;
  margin-left: -7px;
  border: 8px solid transparent;
  border-bottom-width: 0;
  border-top-color: #ff4e4c;
}

.box-search {
  display: flex;
  align-items: center;
  height: 60px;
  margin-top: 18px;
  padding: 0 20px 0 22px;
  border-radius: 5px;
  background: #fff;
  color: #333;
  font-size: 18px;
}

.box-search input { flex: 1; min-width: 0; height: 30px; }
.box-search input::placeholder { color: #b5b5b5; font-weight: 300; }
.box-search svg { width: 31px; height: 31px; }

.hot { display: flex; gap: 12px; margin: 22px 0 0 4px; font-size: 20px; line-height: 24px; font-weight: 300; }
.hot span { margin-right: 8px; }
.hot .top { color: #f55; text-shadow: 2px 4px 4px #888; }

.stats { display: grid; grid-template-columns: repeat(3, 1fr); padding-top: 37px; text-align: center; }
.num { color: #333; font-size: 55px; line-height: 60px; white-space: nowrap; }
.num small { margin-left: 8px; color: #666; font-size: 20px; font-weight: 300; }
.num::after { content: ""; display: block; width: 75px; height: 2px; margin: 11px auto 0; background: #111; }
.cap { margin-top: 24px; color: #666; font-size: 24px; line-height: 34px; white-space: nowrap; }

/* Taskbar */
.taskbar {
  position: relative;
  grid-column: 1 / -1;
  display: flex;
  align-items: center;
  min-width: 0;
  border-top: 1px solid #24364c;
  background: linear-gradient(100deg, #64717d 0, #64717d 8%, #7f8ba0 21%, #8fa2c1 40%, #8fa2c1 45%, #4a64a0 47%, #3c5f9b 50%, #3c5f9b 56%, #6a5a70 58%, #79788f 61%, #332e42 64%, #2e2a40 66%, #6b748b 69%, #6b7890 76%, #464b6c 80%, #574f72 86%, #4d5780 91%, #666580 95%, #5c6b86 100%);
}

.start { width: 44px; height: 33px; margin-left: 11px; }
.start svg { position: relative; flex: none; width: 44px; height: 44px; margin-top: -9px; }
.quick { width: 47px; }
.quick svg { width: 24px; height: 24px; }
.start + .quick { margin-left: 11px; }

.desk { display: flex; align-items: center; flex: none; gap: 6px; width: 180px; height: 33px; margin-left: 1px; padding: 0 7px; background: #eee; color: #111; }
.desk svg { flex: none; width: 24px; height: 24px; }
.desk .up { width: 7px; height: 5px; }
.desk input { width: 124px; min-width: 0; }
.desk-go { width: 71px; height: 33px; background: #2489fe; color: #fff; }

.apps { display: flex; gap: 2px; margin-left: 4px; }
.apps button { width: 48px; height: 33px; border: 1px solid #4d5566; border-radius: 3px; background: linear-gradient(135deg, #c2c8d4, #8c95aa); box-shadow: inset 0 0 0 1px #b9c1cf; }
.apps .hot-app { background: linear-gradient(135deg, #eef1f5, #b6bfcd); }
.apps svg { width: 22px; height: 22px; }
.ps { width: 20px; height: 20px; border-radius: 4px; background: #001d36; color: #31a8ff; font-size: 11px; font-weight: 700; }

.tray { display: flex; align-items: center; gap: 10px; height: 33px; margin-left: auto; color: #fff; }
.tray svg { flex: none; width: 20px; height: 20px; }
.ime { display: flex; align-items: center; gap: 6px; margin: 0 6px 4px 0; }
.ime b { font-size: 18px; text-shadow: 0 0 2px #000, 0 0 2px #000; }
.ime svg.caret { width: 7px; height: 5px; }
.ime svg.narrow { width: 10px; height: 24px; margin: 0 0 -4px 8px; }
.tray time { margin-left: 12px; font-size: 16px; }
.news { position: relative; width: 30px; height: 24px; margin: 0 -4px 0 15px; }
.news svg { width: 24px; height: 24px; }
.news b { position: absolute; right: -3px; bottom: -4px; width: 16px; height: 16px; border-radius: 2px; background: #dc0000; font-size: 12px; line-height: 16px; text-align: center; font-weight: 400; }
.show { width: 29px; height: 33px; border: 1px solid #9fb0c2; background: linear-gradient(135deg, #93a5ba, #66788f); }

/* Floating items */
.tip {
  position: absolute;
  top: 31px;
  left: 645px;
  padding: 1px 6px;
  border: 1px solid #666;
  border-radius: 2px;
  background: linear-gradient(#fff, #e4e5f0);
  color: #575757;
  white-space: nowrap;
}

.cursor { position: absolute; top: 10px; left: 645px; width: 13px; height: 20px; }

.ball { position: absolute; top: 74px; left: 1459px; width: 68px; height: 68px; text-align: center; color: #333; filter: drop-shadow(0 0 3px #bbb); }
.ball svg { position: absolute; inset: 0; }
.ball p { position: relative; }
.pct { padding-top: 14px; font-size: 24px; line-height: 26px; font-weight: 300; }
.pct small { font-size: 14px; font-weight: 400; }
.rate { font-size: 10px; line-height: 12px; padding-top: 2px; }
.rate b { color: #2a86e2; }
```
